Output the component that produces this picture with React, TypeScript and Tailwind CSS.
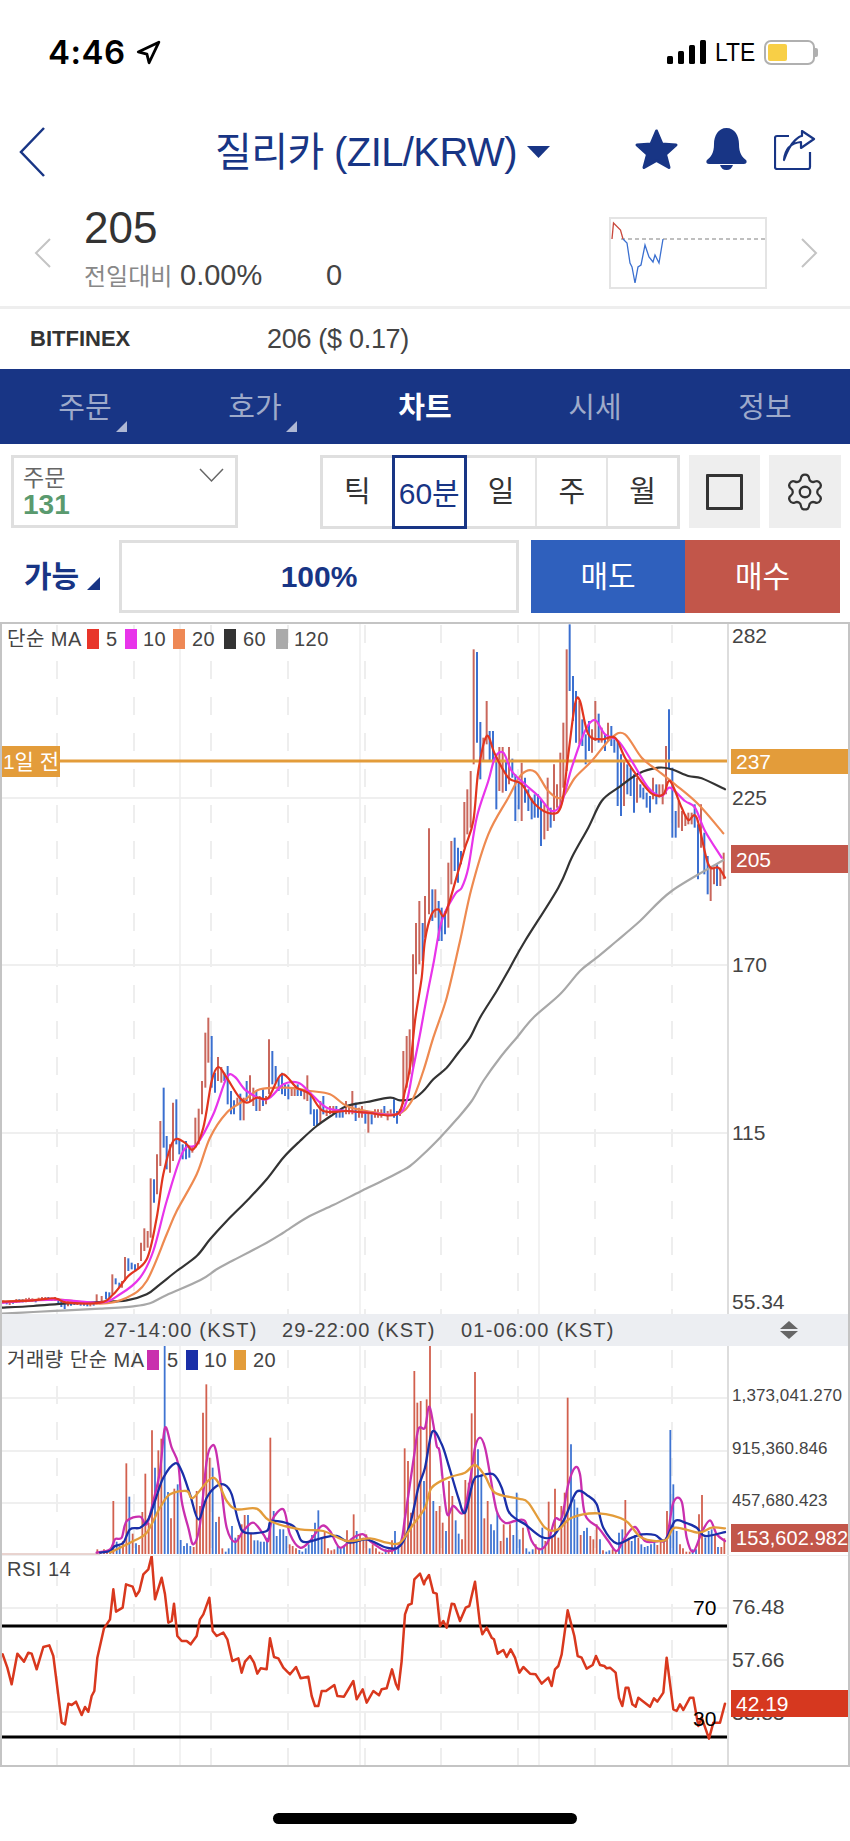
import { Navigation, Settings } from 'lucide-react'

const NAVY = '#183585'

type Candle = [number, number, number, number]
type VolBar = [number, number, number]

// flat x,y lists read off the chart, scaled 3x with an offset per region
const seg = (pts: number[], ox: number, oy: number) => {
  const out: string[] = []
  for (let i = 0; i < pts.length; i += 2) out.push(`${ox + pts[i] / 3},${oy + pts[i + 1] / 3}`)
  return out.join(' ')
}

const main = (left: number[], right: number[]) => seg(left, 0, 940) + ' ' + seg(right, 425, 620)
const vol = (left: number[], right: number[]) => seg(left, 0, 1310) + ' ' + seg(right, 425, 1310)
const rsi = (left: number[], right: number[]) => seg(left, 0, 1540) + ' ' + seg(right, 425, 1540)

// catmull-rom through the read points, the moving averages are smooth curves
const smooth = (points: string) => {
  const p = points.split(' ').map((s) => s.split(',').map(Number))
  let d = `M${p[0][0]} ${p[0][1]}`
  for (let i = 0; i < p.length - 1; i++) {
    const a = p[Math.max(i - 1, 0)]
    const b = p[i]
    const c = p[i + 1]
    const e = p[Math.min(i + 2, p.length - 1)]
    const c1x = b[0] + (c[0] - a[0]) / 6
    const c1y = b[1] + (c[1] - a[1]) / 6
    const c2x = c[0] - (e[0] - b[0]) / 6
    const c2y = c[1] - (e[1] - b[1]) / 6
    d += ` C${c1x.toFixed(1)} ${c1y.toFixed(1)} ${c2x.toFixed(1)} ${c2y.toFixed(1)} ${c[0].toFixed(1)} ${c[1].toFixed(1)}`
  }
  return d
}

const ma5 = main(
  [6,1082,100,1078,165,1072,200,1085,300,1085,340,1060,385,1005,440,955,470,830,490,700,520,600,555,605,580,625,610,560,635,420,655,378,680,410,715,465,740,485,770,470,805,470,845,400,890,440,930,460,970,510,1040,510,1100,515,1190,520,1215,450,1230,380,1245,240,1265,110],
  [0,958,20,880,40,865,60,880,100,750,120,680,145,600,160,450,185,345,210,400,250,470,290,490,330,550,380,578,410,550,430,400,450,250,465,240,490,340,530,355,570,350,600,410,640,470,680,518,715,520,735,480,770,560,790,597,815,590,850,730,880,740,900,770],
)
const ma10 = main(
  [6,1085,165,1076,300,1085,360,1060,420,1010,460,930,500,780,550,630,590,610,640,520,680,410,705,408,740,450,800,475,850,430,895,425,930,455,980,500,1040,510,1100,515,1190,520,1220,480,1240,380,1260,280,1280,170,1300,70],
  [50,900,90,820,110,800,130,740,155,590,190,480,210,410,235,395,260,450,300,490,340,525,380,570,410,545,440,440,480,330,510,297,540,340,580,360,620,420,670,500,710,525,735,500,780,540,810,560,840,630,890,710],
)
const ma20 = main(
  [6,1082,165,1075,300,1088,380,1070,440,1020,500,880,530,810,590,700,630,590,680,515,730,480,780,445,860,440,930,450,990,460,1040,495,1100,510,1190,520,1235,480,1270,390,1300,290,1340,170],
  [105,960,140,800,190,640,250,530,290,460,330,452,370,510,410,530,450,470,500,420,560,350,600,340,650,410,700,450,750,490,820,550,895,637],
)
const ma60 = main(
  [6,1100,100,1095,200,1087,300,1083,380,1078,440,1060,480,1030,530,990,590,945,630,895,680,840,740,780,800,715,850,650,900,600,950,555,1000,520,1040,495,1100,483,1170,470,1200,478,1240,473,1270,450,1300,415,1340,380,1375,335,1410,290,1440,230,1490,150,1530,80],
  [300,960,400,800,440,710,490,620,530,540,580,500,640,458,700,440,740,445,790,465,830,472,900,505],
)
const ma120 = main(
  [6,1118,100,1113,200,1108,300,1103,400,1096,450,1087,500,1062,600,1018,650,985,700,958,800,905,850,875,920,830,1000,792,1080,752,1150,718,1200,692,1230,675,1270,640,1320,590,1370,535,1415,480,1450,420,1500,350,1550,290,1600,230,1680,160,1740,90,1790,50,1850,0],
  [645,900,740,810,895,718],
)

const lowCandles: Candle[] = [
  [10,1078,1088,1],[20,1080,1090,0],[29,1082,1092,1],[39,1078,1088,0],[49,1074,1086,1],[58,1074,1084,0],[68,1074,1084,0],[78,1072,1084,1],[87,1070,1082,1],[97,1072,1082,1],[107,1074,1084,0],[116,1070,1080,1],[126,1068,1080,1],[136,1068,1078,1],[145,1068,1078,0],[155,1070,1080,1],[165,1068,1080,1],[175,1072,1090,0],[184,1078,1098,0],[194,1082,1104,0],[204,1080,1096,1],[213,1082,1094,0],[223,1080,1092,0],[232,1082,1092,1],[242,1082,1094,0],[252,1084,1094,0],[262,1084,1096,0],[271,1086,1096,1],[281,1084,1094,0],
]

const leftCandles: Candle[] = [
  [290,1060,1090,1],[305,1065,1085,1],[318,1052,1075,0],[328,1054,1072,0],[337,1000,1060,1],[347,1012,1030,0],[358,1025,1040,0],[366,1020,1040,1],[375,948,1020,1],[385,952,990,0],[395,965,985,0],[405,970,990,0],[414,966,985,1],[423,905,960,1],[433,862,930,1],[443,870,920,1],[452,712,890,1],[462,715,785,0],[471,640,760,1],[481,540,675,1],[491,440,620,0],[500,585,685,0],[510,610,695,1],[519,485,660,1],[529,475,610,0],[538,595,640,0],[548,610,655,0],[558,600,655,0],[568,615,650,0],[577,615,635,1],[586,530,620,1],[596,503,610,1],[606,420,520,1],[616,275,440,1],[625,230,365,1],[635,285,440,0],[645,395,455,0],[654,348,420,1],[664,378,425,1],[673,395,420,0],[683,375,490,0],[693,450,520,0],[702,478,520,0],[712,470,490,1],[721,458,538,0],[731,470,538,1],[740,420,480,0],[750,403,480,1],[760,440,495,1],[769,450,510,0],[779,465,510,1],[789,445,495,0],[798,465,490,1],[807,295,460,1],[817,330,430,0],[827,375,425,0],[836,410,450,0],[846,395,460,0],[855,430,465,0],[865,430,475,0],[875,440,465,1],[884,440,465,1],[893,430,465,0],[903,445,465,0],[913,445,475,1],[922,403,480,1],[932,455,520,0],[942,505,555,0],[951,505,555,0],[961,480,545,1],[970,465,520,0],[980,505,525,1],[990,495,520,1],[1000,495,520,1],[1009,495,530,0],[1019,505,530,0],[1028,505,530,0],[1038,480,520,1],[1047,495,520,1],[1057,450,520,1],[1067,485,540,0],[1077,500,530,1],[1086,495,530,1],[1096,510,548,0],[1105,510,575,1],[1115,520,550,0],[1125,505,530,1],[1134,505,530,1],[1144,505,530,1],[1153,495,525,0],[1163,510,538,1],[1172,505,525,1],[1182,475,530,0],[1191,510,548,0],[1200,505,525,1],[1210,330,490,1],[1220,285,440,1],[1229,265,400,1],[1239,40,380,1],[1248,-54,100,1],[1258,-120,70,1],[1268,-54,60,0],
]

const rightCandles: Candle[] = [
  [0,825,950,1],[12,622,880,1],[22,805,900,0],[31,805,890,1],[41,840,960,0],[50,860,960,0],[60,870,940,0],[70,725,920,1],[79,660,790,1],[89,650,750,0],[99,680,785,0],[108,690,730,0],[118,543,680,1],[127,505,640,1],[137,450,620,1],[146,85,430,1],[156,93,365,0],[166,303,475,0],[175,350,420,1],[185,240,370,1],[194,330,420,0],[204,330,420,0],[214,410,565,0],[223,378,510,1],[233,378,515,1],[243,420,510,0],[252,378,490,1],[262,413,470,0],[271,460,600,0],[281,480,565,0],[290,425,600,1],[300,470,545,0],[310,505,570,0],[320,530,595,0],[329,520,590,0],[339,520,590,0],[348,535,675,0],[358,550,655,1],[368,470,630,1],[377,560,620,0],[387,430,600,1],[396,490,560,1],[406,395,560,1],[415,305,500,1],[425,85,450,1],[434,10,210,0],[444,165,300,0],[453,210,365,0],[463,240,370,1],[472,295,375,0],[482,340,430,0],[492,300,390,0],[501,325,395,1],[511,240,360,1],[521,278,365,0],[530,320,365,1],[540,340,390,0],[549,305,360,1],[559,315,375,0],[568,355,395,0],[578,360,555,0],[588,400,585,0],[597,420,555,1],[607,430,520,0],[617,440,525,0],[627,460,575,0],[636,470,545,1],[646,490,530,0],[655,500,535,0],[665,515,560,0],[675,525,575,0],[684,470,535,1],[694,490,550,0],[703,490,530,1],[713,490,550,1],[723,375,520,1],[732,265,445,0],[742,440,650,0],[752,570,650,0],[761,540,620,1],[771,570,630,1],[781,580,615,1],[790,575,610,1],[800,575,610,1],[809,550,620,0],[819,610,775,0],[828,550,680,1],[838,635,760,0],[848,705,820,0],[857,740,840,1],[867,740,790,1],[876,730,795,0],[886,740,795,1],[896,695,775,1],
]

const leftVol: VolBar[] = [
  [292,715,1],[302,722,1],[312,715,1],[321,720,1],[331,718,0],[340,570,1],[350,692,0],[359,705,0],[369,690,1],[379,457,1],[388,557,0],[398,668,1],[408,697,0],[417,702,1],[427,603,1],[436,488,1],[446,635,1],[456,358,1],[465,470,0],[475,418,1],[484,383,1],[494,105,0],[504,543,0],[513,622,1],[523,533,1],[533,520,0],[542,687,0],[552,705,0],[561,697,0],[571,705,0],[581,708,1],[590,540,1],[600,585,1],[609,305,1],[619,220,1],[629,440,1],[638,470,0],[648,633,0],[657,617,1],[667,712,1],[677,722,0],[686,712,0],[696,645,0],[706,680,0],[715,672,1],[725,640,1],[734,612,1],[744,612,0],[753,665,1],[763,688,0],[773,688,0],[782,692,0],[792,692,0],[801,680,0],[811,380,1],[821,600,0],[830,675,0],[840,655,0],[850,655,0],[859,675,0],[869,700,1],[878,705,1],[888,712,1],[898,717,0],[907,722,0],[917,712,0],[926,700,0],[936,672,0],[945,635,0],[955,598,0],[965,680,0],[974,660,1],[984,712,1],[994,718,1],[1003,715,1],[1013,705,0],[1022,712,0],[1032,705,0],[1041,658,1],[1051,690,1],[1061,610,1],[1070,660,0],[1080,670,1],[1090,680,1],[1099,670,1],[1109,712,0],[1118,700,1],[1128,712,1],[1138,722,1],[1147,725,1],[1157,715,0],[1166,715,1],[1176,688,1],[1185,660,0],[1195,705,0],[1205,700,1],[1214,412,1],[1224,450,1],[1233,605,1],[1243,180,1],[1252,275,1],[1262,270,1],[1272,510,0],
]

const rightVol: VolBar[] = [
  [5,265,1],[15,105,1],[25,570,0],[34,600,1],[44,585,1],[53,635,1],[63,660,0],[72,510,1],[82,555,1],[92,628,0],[101,668,0],[111,685,1],[121,507,1],[131,515,1],[140,307,1],[150,183,1],[159,415,0],[169,495,0],[178,622,1],[188,570,1],[198,640,0],[207,658,0],[217,605,0],[227,690,1],[236,640,1],[246,680,0],[255,640,1],[265,672,0],[275,545,0],[284,685,0],[294,650,1],[304,712,0],[313,722,0],[323,715,0],[332,700,1],[342,710,1],[352,650,0],[361,690,1],[371,572,1],[381,680,1],[390,533,1],[400,680,1],[409,585,1],[419,545,1],[428,260,1],[438,400,0],[448,565,0],[457,590,0],[467,672,1],[477,660,0],[486,650,0],[496,675,1],[505,685,1],[515,640,1],[525,685,0],[534,718,1],[544,722,0],[553,718,0],[563,715,1],[572,718,1],[582,665,0],[592,655,0],[601,567,1],[611,680,1],[620,690,0],[630,672,0],[640,680,1],[649,700,0],[659,708,0],[668,705,0],[678,700,0],[688,690,0],[697,702,1],[707,692,1],[717,690,1],[726,600,1],[736,357,0],[745,520,0],[755,660,0],[765,700,1],[774,712,1],[784,722,1],[794,722,1],[803,715,0],[813,715,0],[822,610,1],[831,552,1],[841,680,0],[851,660,0],[860,655,0],[870,672,1],[879,708,0],[889,708,1],[898,682,1],
]

const volMa5 = vol(
  [290,725,330,715,345,685,365,680,380,630,420,617,440,640,460,570,480,480,495,350,515,410,535,460,545,570,565,650,580,700,600,640,620,450,635,405,648,420,665,540,680,650,705,693,730,660,760,635,790,670,805,690,815,630,850,595,870,670,900,710,930,690,965,645,990,660,1020,710,1060,680,1090,670,1110,690,1160,720,1200,700,1215,620,1240,450,1255,355,1275,350],
  [12,287,25,340,35,405,45,430,65,605,85,585,115,605,135,510,150,410,165,380,180,410,195,490,215,600,240,635,270,630,300,630,320,690,345,715,370,690,390,625,410,620,430,520,450,470,465,490,480,610,520,650,550,690,575,720,600,680,630,648,660,690,700,690,725,680,745,575,770,572,785,680,805,722,830,665,855,628,875,670,900,690],
)
const volMa10 = vol(
  [300,725,330,720,345,705,370,695,390,655,420,650,445,625,465,570,490,500,525,457,545,480,570,550,595,625,620,560,650,525,675,522,695,550,715,630,735,665,800,660,815,630,880,645,905,690,935,690,970,680,1010,675,1050,695,1100,685,1160,710,1200,705,1230,640,1255,530,1275,470],
  [22,362,50,400,70,460,100,560,120,605,145,510,165,495,205,490,230,530,250,600,275,625,300,640,350,678,385,675,420,620,455,542,490,555,515,580,535,650,575,697,620,680,650,670,690,672,720,688,750,630,780,635,815,650,840,675,900,663],
)
const volMa20 = vol(
  [330,725,400,690,440,665,480,590,510,550,560,540,580,560,640,500,680,570,710,595,770,593,810,630,900,655,970,660,1040,690,1110,682,1160,695,1200,695,1240,640,1275,590],
  [20,530,70,500,120,485,150,462,180,495,210,545,280,563,310,575,360,650,400,655,440,620,520,607,600,628,650,680,720,688,750,650,820,665,860,650,900,652],
)

const rsiLine = rsi(
  [8,340,22,380,35,430,52,338,72,362,85,335,95,338,110,385,130,318,148,313,160,345,172,440,185,545,195,550,205,488,215,492,228,482,245,522,255,498,265,512,275,465,283,450,292,350,312,262,330,235,340,145,348,212,368,200,378,130,398,137,408,165,418,150,430,100,445,85,455,45,465,175,485,110,495,160,505,245,515,240,522,188,532,285,545,300,560,300,572,310,590,285,600,235,610,220,628,170,638,270,650,285,670,275,682,295,697,360,715,352,725,395,735,362,750,345,762,365,772,398,782,382,800,385,810,292,822,348,835,352,850,380,870,400,888,378,902,412,925,407,935,465,945,495,955,495,965,450,978,450,1003,432,1012,465,1032,467,1060,420,1070,475,1088,445,1100,485,1120,450,1137,463,1145,445,1160,442,1176,385,1188,430,1195,445,1205,360,1215,220,1225,192,1235,188,1243,115,1260,98,1272,130],
  [0,120,12,102,25,155,35,158,45,255,55,240,65,260,80,188,88,190,105,240,122,200,133,195,150,122,165,250,172,280,185,260,200,290,207,295,218,338,235,327,245,348,257,325,270,350,283,395,295,378,315,398,332,400,350,428,370,410,380,435,390,385,400,375,410,340,428,208,448,285,458,345,470,350,485,383,503,372,513,345,525,372,538,375,545,382,555,380,572,395,582,470,592,495,602,440,610,440,622,490,632,497,640,470,675,497,687,472,697,482,715,455,725,350,745,505,755,510,765,490,775,507,795,470,805,470,820,555,830,530,852,593,865,545,885,545,900,488],
)

const solidX = [180, 360, 539]
const dashX = [57, 134, 211, 288, 365, 441, 518, 595, 672]

const PlotGrid = ({ top, bottom, rows, dashStart }: { top: number; bottom: number; rows: number[]; dashStart: number }) => (
  <g>
    {rows.map((y) => (
      <line key={y} x1={2} x2={727} y1={y} y2={y} stroke="#efefef" strokeWidth={2} />
    ))}
    {solidX.map((x) => (
      <line key={x} x1={x} x2={x} y1={top} y2={bottom} stroke="#eeeeee" strokeWidth={1.5} />
    ))}
    {dashX.map((x) => (
      <line key={x} x1={x} x2={x} y1={dashStart} y2={bottom} stroke="#eeeeee" strokeWidth={2} strokeDasharray="18 18" />
    ))}
  </g>
)

const candleLines = (list: Candle[], ox: number, oy: number) =>
  list.map(([x, t, b, up], i) => (
    <line
      key={`${ox}-${oy}-${i}`}
      x1={ox + x / 3}
      x2={ox + x / 3}
      y1={oy + t / 3}
      y2={oy + b / 3}
      stroke={up ? '#c9675c' : '#3a6fd0'}
      strokeWidth={2}
    />
  ))

const volLines = (list: VolBar[], ox: number) =>
  list.map(([x, t, up], i) => (
    <line
      key={`${ox}-${i}`}
      x1={ox + x / 3}
      x2={ox + x / 3}
      y1={1310 + t / 3}
      y2={1553}
      stroke={up ? '#d2604e' : '#3f74d2'}
      strokeWidth={1.8}
    />
  ))

const Line = ({ points, color, width = 2.2 }: { points: string; color: string; width?: number }) => (
  <path d={smooth(points)} fill="none" stroke={color} strokeWidth={width} strokeLinejoin="round" strokeLinecap="round" />
)

const Swatch = ({ className }: { className: string }) => <span className={`w-[12px] h-[20px] ${className}`} />

const AxisLabel = ({ className, children }: { className: string; children: React.ReactNode }) => (
  <span className={`absolute left-[3px] leading-none ${className}`}>{children}</span>
)

const Tag = ({ className, children }: { className: string; children: React.ReactNode }) => (
  <div className={`absolute left-[2px] right-0 flex items-center pl-[5px] text-white leading-none ${className}`}>{children}</div>
)

const StatusBar = () => (
  <div className="h-[100px] relative">
    <div className="absolute left-[48px] top-[36px] flex items-center gap-[9px]">
      <span className="font-['Inter',sans-serif] text-[33px] font-semibold leading-[33px] text-black tracking-[0.5px]">4:46</span>
      <Navigation size={26} strokeWidth={2.6} color="#000" />
    </div>
    <div className="absolute left-[667px] top-[39px] flex items-center">
      <svg width="40" height="26" viewBox="0 0 40 26">
        <rect x="0" y="17" width="6" height="8" rx="1.5" fill="#000" />
        <rect x="11" y="12" width="6" height="13" rx="1.5" fill="#000" />
        <rect x="22" y="6" width="6" height="19" rx="1.5" fill="#000" />
        <rect x="33" y="1" width="6" height="24" rx="1.5" fill="#000" />
      </svg>
      <span className="ml-[8px] text-[26px] leading-none text-black font-medium scale-x-[0.88] origin-left w-[49px]">LTE</span>
      <div className="w-[51px] h-[25px] border-2 border-[#b0b0b0] rounded-[7px] p-[2px]">
        <div className="w-[19px] h-full bg-[#f8cf46] rounded-[2px]" />
      </div>
      <div className="w-[3px] h-[9px] bg-[#b0b0b0] rounded-r-[2px]" />
    </div>
  </div>
)

const Header = () => (
  <div className="h-[104px] relative flex items-center">
    <svg className="ml-[19px]" width="26" height="50" viewBox="0 0 26 50">
      <path d="M25 1 L2 25 L25 49" fill="none" stroke={NAVY} strokeWidth={2.5} />
    </svg>
    <div className="ml-[170px] flex items-center">
      <span className="text-[40px] leading-none tracking-[-0.6px]" style={{ color: NAVY }}>질리카 (ZIL/KRW)</span>
      <svg className="ml-[10px]" width="23" height="12" viewBox="0 0 23 12">
        <path d="M0 0H23L11.5 12Z" fill={NAVY} />
      </svg>
    </div>
    <svg className="absolute left-[634px] top-[28px]" width="45" height="42" viewBox="0 0 45 42">
      <path d="M22.5 3 L28 16 L42 17 L31.5 26.5 L35 39.5 L22.5 32.5 L10 39.5 L13.5 26.5 L3 17 L17 16 Z" fill={NAVY} stroke={NAVY} strokeWidth={3} strokeLinejoin="round" />
    </svg>
    <svg className="absolute left-[706px] top-[28px]" width="41" height="42" viewBox="0 0 41 42">
      <path d="M20.5 0 C29 0 33 8 33 16 C33 25 36 29 40 32 C41 33 41 36 38 36 H3 C0 36 0 33 1 32 C5 29 8 25 8 16 C8 8 12 0 20.5 0 Z" fill={NAVY} />
      <path d="M14 37 H27 C26 40 24 42 20.5 42 C17 42 15 40 14 37 Z" fill={NAVY} />
    </svg>
    <svg className="absolute left-[774px] top-[30px]" width="42" height="40" viewBox="0 0 42 40">
      <path d="M15 6 H3 Q1 6 1 8 V37 Q1 39 3 39 H34 Q36 39 36 37 V22" fill="none" stroke={NAVY} strokeWidth={2.2} />
      <path d="M10 30 C11 19 17 13 27 12 V18 L40 9 L28 1 V6 C27 6 17 9 10 30 Z" fill="none" stroke={NAVY} strokeWidth={2.2} strokeLinejoin="round" />
    </svg>
  </div>
)

const Quote = () => (
  <div className="h-[105px] flex items-start border-b-[3px] border-[#eeeeee]">
    <svg className="ml-[34px] mt-[34px]" width="17" height="30" viewBox="0 0 17 30">
      <path d="M16 1 L2 15 L16 29" fill="none" stroke="#c4c4c4" strokeWidth={2} />
    </svg>
    <div className="ml-[33px] pt-[2px]">
      <div className="text-[44px] leading-[44px] text-[#333333]">205</div>
      <div className="mt-[11px] flex items-baseline text-[#444444] text-[29px] leading-[28px]">
        <span className="w-[96px] text-[24px] text-[#888888] whitespace-nowrap">전일대비</span>
        <span className="w-[146px]">0.00%</span>
        <span>0</span>
      </div>
    </div>
    <div className="ml-auto mt-[13px] w-[158px] h-[72px] border-2 border-[#e4e4e4]">
      <svg width="154" height="68" viewBox="610 219 154 68">
        <line x1="620" x2="764" y1="239" y2="239" stroke="#aaaaaa" strokeWidth={1.5} strokeDasharray="4 3" />
        <polyline points="611,239 612.5,223 619.5,230 622,239" fill="none" stroke="#c9483c" strokeWidth={1.3} />
        <polyline points="622,239 626,243 629,263 631,267 634,283 637,267 640,265 644,245 648,257 652,262 654,255 658,263 662,239" fill="none" stroke="#3a6fd0" strokeWidth={1.3} />
      </svg>
    </div>
    <svg className="ml-[34px] mt-[34px] mr-[32px]" width="17" height="30" viewBox="0 0 17 30">
      <path d="M1 1 L15 15 L1 29" fill="none" stroke="#c4c4c4" strokeWidth={2} />
    </svg>
  </div>
)

const Exchange = () => (
  <div className="h-[60px] pl-[30px] flex items-center">
    <span className="w-[237px] text-[22px] font-bold text-[#333333] leading-none">BITFINEX</span>
    <span className="text-[27px] text-[#444444] leading-none tracking-[-0.3px]">206 ($ 0.17)</span>
  </div>
)

const Tabs = () => {
  const tabs = [
    { label: '주문', corner: true },
    { label: '호가', corner: true },
    { label: '차트', active: true },
    { label: '시세' },
    { label: '정보' },
  ]
  return (
    <div className="h-[75px] grid grid-cols-5 bg-[#183585]">
      {tabs.map((t) => (
        <div key={t.label} className="flex items-center justify-center pt-[3px]">
          <div className={`relative text-[29px] leading-none ${t.active ? 'text-white font-bold' : 'text-[#9eaaca]'}`}>
            {t.label}
            {t.corner && (
              <svg className="absolute left-[58px] top-[27px]" width="11" height="11" viewBox="0 0 11 11">
                <path d="M11 0V11H0Z" fill="#aeb8d4" />
              </svg>
            )}
          </div>
        </div>
      ))}
    </div>
  )
}

const Toolbar = () => (
  <div className="pl-[11px]">
    <div className="pt-[11px] flex items-start">
      <div className="relative w-[227px] h-[73px] border-[3px] border-[#dfdfdf] pl-[9px] pt-[7px]">
        <div className="text-[23px] leading-[26px] text-[#666666]">주문</div>
        <div className="text-[28px] leading-[28px] font-bold text-[#5a9a6e]">131</div>
        <svg className="absolute right-[11px] top-[10px]" width="25" height="15" viewBox="0 0 25 15">
          <path d="M1 1 L12.5 13 L24 1" fill="none" stroke="#666666" strokeWidth={1.5} />
        </svg>
      </div>
      <div className="ml-[82px] flex w-[360px] h-[74px] border-[3px] border-[#dfdfdf]">
        <div className="flex-1 flex items-center justify-center pt-[2px] text-[29px] text-[#333333]">틱</div>
        <div className="flex-1 -my-[3px] border-[3px] border-[#183585] flex items-center justify-center pt-[2px] text-[30px] text-[#183585] whitespace-nowrap">60분</div>
        <div className="flex-1 flex items-center justify-center pt-[2px] text-[29px] text-[#333333] border-r-2 border-[#e4e4e4]">일</div>
        <div className="flex-1 flex items-center justify-center pt-[2px] text-[29px] text-[#333333] border-r-2 border-[#e4e4e4]">주</div>
        <div className="flex-1 flex items-center justify-center pt-[2px] text-[29px] text-[#333333]">월</div>
      </div>
      <div className="ml-[9px] w-[71px] h-[73px] bg-[#eeeeee] flex items-center justify-center">
        <div className="w-[37px] h-[36px] border-[3px] border-[#333333] rounded-[1px]" />
      </div>
      <div className="ml-[9px] w-[72px] h-[73px] bg-[#eeeeee] flex items-center justify-center">
        <Settings size={42} strokeWidth={1.3} color="#333333" />
      </div>
    </div>
    <div className="pt-[11px] flex items-stretch h-[84px]">
      <div className="w-[108px] pl-[13px] flex items-center">
        <span className="text-[30px] font-bold leading-none text-[#183585]">가능</span>
        <svg className="ml-[8px] mt-[13px]" width="13" height="13" viewBox="0 0 13 13">
          <path d="M13 0V13H0Z" fill="#183585" />
        </svg>
      </div>
      <div className="w-[400px] border-[3px] border-[#dfdfdf] flex items-center justify-center text-[30px] font-bold text-[#183585]">100%</div>
      <div className="ml-[12px] w-[154px] bg-[#2f60bd] flex items-center justify-center text-[30px] text-white">매도</div>
      <div className="w-[155px] bg-[#c2564a] flex items-center justify-center text-[30px] text-white">매수</div>
    </div>
  </div>
)

const MainPane = () => (
  <div className="h-[690px] flex">
    <div className="relative w-[725px] overflow-hidden">
      <svg className="block" width="725" height="690" viewBox="2 623 725 690">
        <PlotGrid top={623} bottom={1313} rows={[797, 964, 1132]} dashStart={624} />
        {candleLines(lowCandles, 0, 940)}
        {candleLines(leftCandles, 0, 940)}
        {candleLines(rightCandles, 425, 620)}
        <line x1="2" x2="727" y1="760" y2="760" stroke="#e39c3a" strokeWidth={3} />
        <Line points={ma120} color="#a8a8a8" />
        <Line points={ma60} color="#333333" />
        <Line points={ma20} color="#ee8a50" />
        <Line points={ma10} color="#e834ea" />
        <Line points={ma5} color="#e2351f" />
      </svg>
      <div className="absolute left-[5px] top-[5px] flex items-center text-[20px] leading-[20px] text-[#444444] tracking-[0.5px]">
        <span className="w-[80px]">단순 MA</span>
        <Swatch className="bg-[#e8352a]" />
        <span className="ml-[7px] w-[19px]">5</span>
        <Swatch className="bg-[#e834ea]" />
        <span className="ml-[6px] w-[30px]">10</span>
        <Swatch className="bg-[#ee8855]" />
        <span className="ml-[7px] w-[32px]">20</span>
        <Swatch className="bg-[#333333]" />
        <span className="ml-[7px] w-[33px]">60</span>
        <Swatch className="bg-[#aaaaaa]" />
        <span className="ml-[6px]">120</span>
      </div>
      <div className="absolute left-0 top-[122px] w-[58px] h-[31px] bg-[#e39c3a] text-white text-[21px] leading-none flex items-center justify-center">1일 전</div>
    </div>
    <div className="relative flex-1 border-l-2 border-[#dddddd] text-[21px] text-[#444444]">
      <AxisLabel className="top-[1px]">282</AxisLabel>
      <AxisLabel className="top-[163px]">225</AxisLabel>
      <AxisLabel className="top-[330px]">170</AxisLabel>
      <AxisLabel className="top-[498px]">115</AxisLabel>
      <AxisLabel className="top-[667px]">55.34</AxisLabel>
      <Tag className="top-[125px] h-[25px] bg-[#e39c3a]">237</Tag>
      <Tag className="top-[221px] h-[28px] bg-[#c2564a]">205</Tag>
    </div>
  </div>
)

const TimeAxis = () => (
  <div className="h-[32px] bg-[#eceef2] flex items-center text-[#444444] text-[20px] leading-none tracking-[1.2px]">
    <span className="ml-[102px] w-[178px]">27-14:00 (KST)</span>
    <span className="w-[179px]">29-22:00 (KST)</span>
    <span>01-06:00 (KST)</span>
    <svg className="ml-[165px]" width="18" height="18" viewBox="0 0 18 18">
      <path d="M9 0L18 8H0Z" fill="#666666" />
      <path d="M0 10H18L9 18Z" fill="#666666" />
    </svg>
  </div>
)

const VolumePane = () => (
  <div className="h-[209px] flex">
    <div className="relative w-[725px] overflow-hidden">
      <svg className="block" width="725" height="209" viewBox="2 1345 725 209">
        <PlotGrid top={1345} bottom={1554} rows={[1397, 1450, 1502]} dashStart={1349} />
        {volLines(leftVol, 0)}
        {volLines(rightVol, 425)}
        <polyline points="2,1553 100,1553" fill="none" stroke="#d2a8a0" strokeWidth={1} />
        <Line points={volMa5} color="#c92fae" width={2.3} />
        <Line points={volMa10} color="#1a2fa8" width={2.3} />
        <Line points={volMa20} color="#e39c3a" width={2.3} />
      </svg>
      <div className="absolute left-[5px] top-[4px] flex items-center text-[20px] leading-[20px] text-[#444444] tracking-[0.5px]">
        <span className="w-[140px] whitespace-nowrap">거래량 단순 MA</span>
        <Swatch className="bg-[#c92fae]" />
        <span className="ml-[8px] w-[19px]">5</span>
        <Swatch className="bg-[#1a2fa8]" />
        <span className="ml-[6px] w-[30px]">10</span>
        <Swatch className="bg-[#e39c3a]" />
        <span className="ml-[7px]">20</span>
      </div>
    </div>
    <div className="relative flex-1 border-l-2 border-[#dddddd] text-[17px] text-[#444444] tracking-[0.1px]">
      <AxisLabel className="top-[41px]">1,373,041.270</AxisLabel>
      <AxisLabel className="top-[94px]">915,360.846</AxisLabel>
      <AxisLabel className="top-[146px]">457,680.423</AxisLabel>
      <Tag className="top-[178px] h-[28px] bg-[#c2564a] text-[20px] pl-[4px]">153,602.982</Tag>
    </div>
  </div>
)

const RsiPane = () => (
  <div className="h-[210px] flex border-t border-[#eeeeee]">
    <div className="relative w-[725px] overflow-hidden">
      <svg className="block" width="725" height="209" viewBox="2 1555 725 209">
        <PlotGrid top={1555} bottom={1764} rows={[1607, 1659, 1711]} dashStart={1567} />
        <line x1="2" x2="727" y1="1625" y2="1625" stroke="#000000" strokeWidth={3} />
        <line x1="2" x2="727" y1="1736" y2="1736" stroke="#000000" strokeWidth={3} />
        <polyline points={rsiLine} fill="none" stroke="#d9381e" strokeWidth={2.5} strokeLinejoin="round" strokeLinecap="round" />
      </svg>
      <span className="absolute left-[5px] top-[3px] text-[20px] leading-[20px] text-[#444444] tracking-[0.5px]">RSI 14</span>
      <span className="absolute left-[691px] top-[41px] text-[21px] leading-none text-black">70</span>
      <span className="absolute left-[691px] top-[152px] text-[21px] leading-none text-black">30</span>
    </div>
    <div className="relative flex-1 border-l-2 border-[#dddddd] text-[21px] text-[#444444]">
      <AxisLabel className="top-[40px]">76.48</AxisLabel>
      <AxisLabel className="top-[93px]">57.66</AxisLabel>
      <AxisLabel className="top-[146px]">38.83</AxisLabel>
      <Tag className="top-[134px] h-[27px] bg-[#d6381f]">42.19</Tag>
    </div>
  </div>
)

export default function App() {
  return (
    <div className="w-[850px] h-[1841px] bg-white overflow-hidden font-['Liberation_Sans','Noto_Sans_CJK_KR',sans-serif]">
      <StatusBar />
      <Header />
      <Quote />
      <Exchange />
      <Tabs />
      <Toolbar />
      <div className="mt-[9px] border-2 border-[#c4c4c4]">
        <MainPane />
        <TimeAxis />
        <VolumePane />
        <RsiPane />
      </div>
      <div className="mt-[46px] mx-auto w-[304px] h-[11px] rounded-full bg-black" />
    </div>
  )
}
